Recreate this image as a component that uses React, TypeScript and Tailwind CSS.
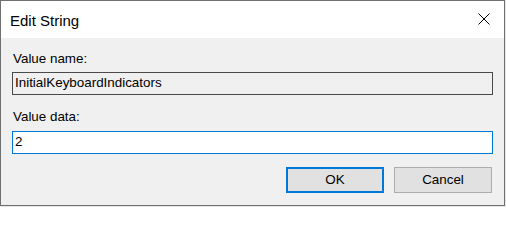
export default function App() {
  return (
    <div className="h-[207px] w-[506px] bg-[#e8e8e8]">
      <div className="flex h-[206px] w-[505px] flex-col border border-[#707070] font-['Liberation_Sans',Arial,sans-serif] text-black">
        {/* title bar */}
        <div className="flex h-[37px] items-start justify-between bg-white pl-[9px] pr-[14px]">
          <span className="mt-[11px] text-[15px] leading-[18px]">Edit String</span>
          <svg
            className="mt-[12px]"
            width="12"
            height="12"
            viewBox="0 0 12 12"
            fill="none"
            stroke="#000"
            strokeWidth="1"
          >
            <path d="M0.5 0.5 L11.5 11.5 M11.5 0.5 L0.5 11.5" />
          </svg>
        </div>

        {/* body */}
        <div className="flex flex-1 flex-col bg-[#f0f0f0] px-[11px] pb-[12px] pt-[13px] text-[13.4px] leading-[16px]">
          <label className="h-[16px] pl-[1px]">Value name:</label>
          <div className="mt-[5px] h-[23px] border border-[#4a4a4a] bg-[#f0f0f0] pl-[2px] leading-[19px]">
            InitialKeyboardIndicators
          </div>

          <label className="mt-[14px] h-[16px] pl-[1px]">Value data:</label>
          <div className="mt-[6px] h-[23px] border border-[#0078d7] bg-white pl-[2px] leading-[19px]">
            2
          </div>

          <div className="mr-[1px] mt-[13px] flex justify-end gap-[10px]">
            <button className="flex h-[26px] w-[98px] items-center justify-center border-2 border-[#0078d7] bg-[#e1e1e1] leading-[16px]">
              OK
            </button>
            <button className="flex h-[26px] w-[98px] items-center justify-center border border-[#adadad] bg-[#e1e1e1] leading-[16px]">
              Cancel
            </button>
          </div>
        </div>
      </div>
    </div>
  );
}
